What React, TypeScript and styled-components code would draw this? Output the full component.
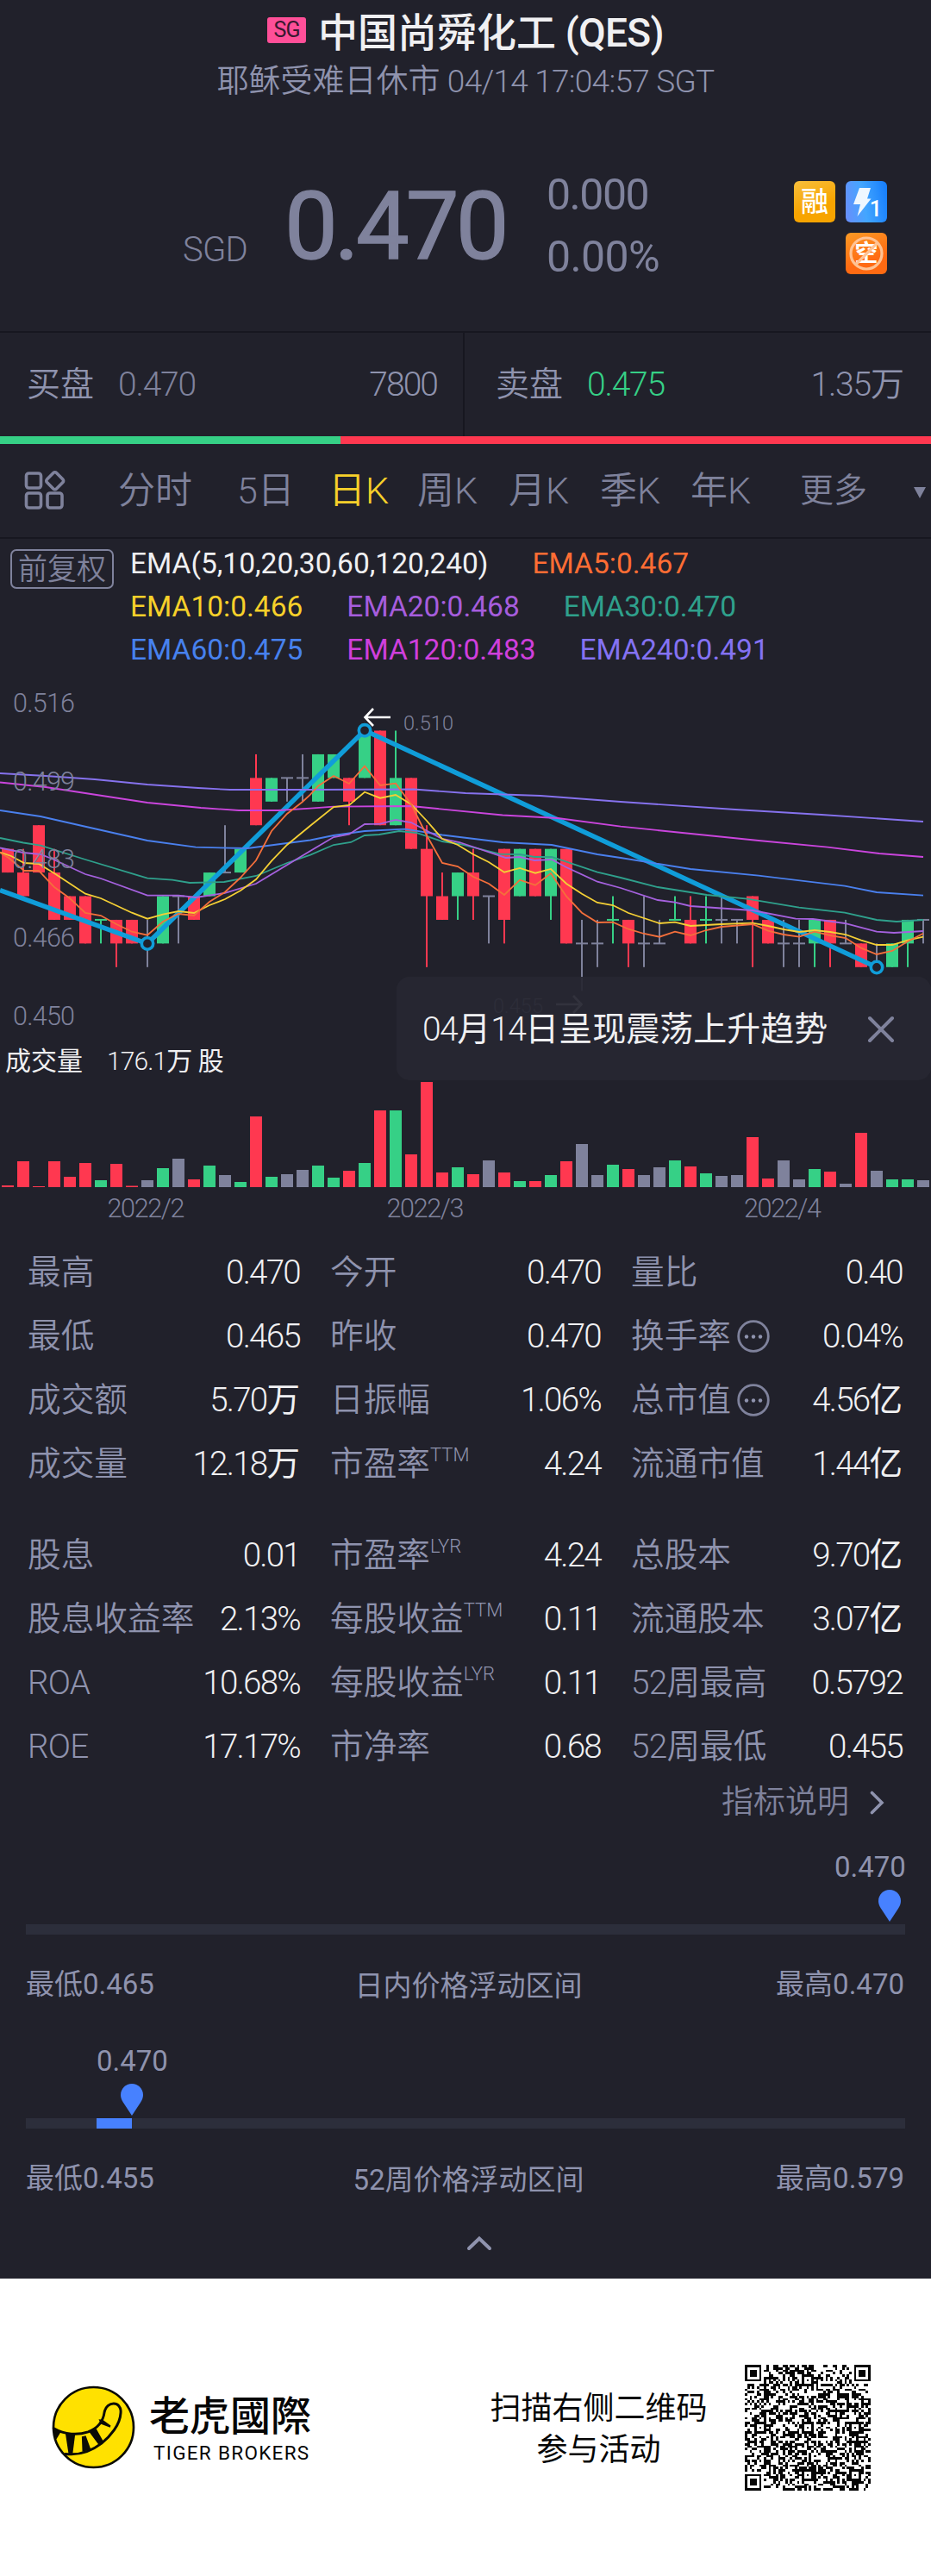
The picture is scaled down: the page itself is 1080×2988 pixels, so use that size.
import React from 'react';
import styled, { createGlobalStyle } from 'styled-components';

const colors = {
  bg: '#21212b',
  line: '#171720',
  muted: '#7f829c',
  label: '#8f93ae',
  white: '#f0f0f2',
  red: '#ff3850',
  green: '#36d086',
  grey: '#7f829c',
  yellow: '#f6d02a',
  blue: '#4781ff',
  trend: '#109dd9',
};

const GlobalStyle = createGlobalStyle`
  body {
    margin: 0;
    background: ${colors.bg};
    font-family: Roboto, 'Noto Sans CJK SC', sans-serif;
  }
`;

const Page = styled.div`
  width: 1080px;
  height: 2988px;
  overflow: hidden;
  background: ${colors.bg};
  color: ${colors.label};
  white-space: nowrap;
`;

const Latin = styled.span<{ $spacing: number; $light?: boolean }>`
  letter-spacing: ${({ $spacing }) => $spacing}em;
  font-weight: ${({ $light }) => ($light ? 300 : 'inherit')};
`;

interface MixedProps {
  text: string;
  spacing?: number;
  light?: boolean;
}

// tightens digits and latin letters only, CJK glyphs keep their natural pitch
const Mixed: React.FC<MixedProps> = ({ text, spacing = -0.05, light }) => (
  <span>
    {text.split(/([ -~]+)/).filter(Boolean).map((part, i) =>
      /[ -~]/.test(part) ? <Latin key={i} $spacing={spacing} $light={light}>{part}</Latin> : part
    )}
  </span>
);

/* ---------- header ---------- */

const Header = styled.header`
  box-sizing: border-box;
  height: 386px;
  padding-top: 8px;
  border-bottom: 2px solid ${colors.line};
`;

const TitleRow = styled.div`
  display: flex;
  align-items: center;
  height: 60px;
  padding-left: 310px;
  gap: 14px;
`;

const MarketTag = styled.span`
  width: 45px;
  height: 30px;
  margin-top: -6px;
  border-radius: 3px;
  background: #ff4f98;
  color: #3a1830;
  font-size: 25px;
  line-height: 30px;
  text-align: center;
  letter-spacing: -1px;
`;

const Title = styled.h1`
  margin: 0;
  color: ${colors.white};
  font-size: 46px;
  line-height: 62px;
  font-weight: 500;
`;

const Subtitle = styled.div`
  margin-top: 2px;
  font-size: 37px;
  line-height: 50px;
  font-weight: 350;
  text-align: center;
`;

const QuoteRow = styled.div`
  display: flex;
  align-items: flex-start;
  padding: 78px 51px 0 212px;
  color: ${colors.muted};
`;

const Currency = styled.span`
  width: 118px;
  padding-top: 67px;
  font-size: 40px;
  font-weight: 300;
  line-height: 50px;
`;

const Price = styled.span`
  width: 304px;
  padding-top: 10px;
  font-size: 110px;
  line-height: 110px;
  -webkit-text-stroke: 1.4px ${colors.muted};
`;

const Changes = styled.div`
  display: flex;
  flex-direction: column;
  flex: 1;
  font-size: 50px;
  line-height: 72px;
  margin-top: -8px;
`;

const Badges = styled.div`
  display: grid;
  grid-template-columns: 48px 48px;
  gap: 12px;
  margin-top: 12px;
  justify-items: end;
`;

const Badge = styled.span<{ $bg: string }>`
  position: relative;
  width: 48px;
  height: 48px;
  border-radius: 6px;
  background: ${({ $bg }) => $bg};
  color: #fff;
  font-size: 32px;
  font-weight: 500;
  line-height: 49px;
  text-align: center;
`;

const ShortBadge = styled(Badge)`
  grid-column: 2;
  font-size: 27px;
  font-weight: 700;
`;

const BadgeDrawing = styled.svg`
  position: absolute;
  left: 0;
  top: 0;
`;

const LevelDigit = styled.span`
  position: absolute;
  right: 6px;
  bottom: 4px;
  font-size: 25px;
  line-height: 22px;
`;

/* ---------- bid / ask ---------- */

const BidAsk = styled.section`
  display: flex;
  height: 120px;
`;

const Side = styled.div<{ $ask?: boolean }>`
  box-sizing: border-box;
  display: flex;
  width: ${({ $ask }) => ($ask ? 543 : 537)}px;
  padding: ${({ $ask }) => ($ask ? '0 31px 0 36px' : '0 30px 0 31px')};
  border-left: ${({ $ask }) => ($ask ? `2px solid ${colors.line}` : '0')};
  font-size: 39px;
  line-height: 121px;
  font-weight: 350;
`;

const SidePrice = styled.span<{ $color: string }>`
  flex: 1;
  margin-left: 28px;
  color: ${({ $color }) => $color};
`;

const RatioBar = styled.div`
  height: 9px;
  background: linear-gradient(to right, ${colors.green} 395px, ${colors.red} 395px);
`;

/* ---------- period tabs ---------- */

const Tabs = styled.nav`
  box-sizing: border-box;
  display: flex;
  align-items: center;
  height: 110px;
  padding-left: 28px;
  border-bottom: 2px solid ${colors.line};
`;

const Tab = styled.span<{ $width: number; $active?: boolean; $small?: boolean }>`
  flex: none;
  width: ${({ $width }) => $width}px;
  color: ${({ $active }) => ($active ? colors.yellow : colors.muted)};
  font-size: ${({ $small }) => ($small ? 39 : 43)}px;
  line-height: 109px;
  font-weight: 350;
`;

const GridIcon = styled.svg`
  flex: none;
  margin-right: 61px;
`;

const Arrow = styled.span`
  margin-top: 4px;
  border: 7.5px solid transparent;
  border-top: 13px solid ${colors.muted};
  border-bottom: 0;
`;

/* ---------- EMA legend ---------- */

const Legend = styled.section`
  display: flex;
  box-sizing: border-box;
  height: 155px;
  padding: 4px 0 0 12px;
`;

const AdjustTag = styled.span`
  box-sizing: border-box;
  width: 120px;
  height: 46px;
  margin: 8px 19px 0 0;
  border: 2px solid ${colors.muted};
  border-radius: 7px;
  color: ${colors.muted};
  font-size: 34px;
  line-height: 43px;
  font-weight: 350;
  text-align: center;
`;

const LegendRow = styled.div`
  display: flex;
  gap: 51px;
  height: 50px;
  font-size: 33.5px;
  line-height: 50px;
`;

const LegendItem = styled.span<{ $color: string }>`
  color: ${({ $color }) => $color};
`;

/* ---------- chart ---------- */

const ChartArea = styled.section`
  position: relative;
  height: 651px;
`;

const ChartSvg = styled.svg`
  display: block;
`;

const VolumeTitle = styled.div`
  display: flex;
  gap: 28px;
  height: 48px;
  padding-left: 6px;
  color: ${colors.white};
  font-size: 30px;
  line-height: 49px;
`;

const Toast = styled.div`
  position: absolute;
  left: 460px;
  top: 353px;
  box-sizing: border-box;
  display: flex;
  align-items: center;
  justify-content: space-between;
  width: 620px;
  height: 120px;
  padding: 2px 42px 0 30px;
  border-radius: 15px;
  background: rgba(39, 39, 50, 0.93);
  color: ${colors.white};
  font-size: 39px;
  line-height: 60px;
`;

/* ---------- stats ---------- */

const StatsGrid = styled.section<{ $gap?: boolean }>`
  display: grid;
  grid-template-columns: 316px 314px 315px;
  column-gap: 35px;
  grid-auto-rows: 74px;
  padding-left: 32px;
  margin-top: ${({ $gap }) => ($gap ? 32 : 8)}px;
`;

const Stat = styled.div`
  display: flex;
  align-items: center;
  height: 74px;
  font-size: 38.7px;
  line-height: 74px;
  font-weight: 350;
`;

const StatValue = styled.span`
  margin-left: auto;
  color: ${colors.white};
  font-size: 38.5px;
  font-weight: 400;
`;

const Sup = styled.span`
  align-self: flex-start;
  padding-top: 14px;
  font-size: 22px;
  line-height: 26px;
  font-weight: 300;
`;

const InfoIcon = styled.svg`
  margin-left: 7px;
`;

const HelpLink = styled.div`
  display: flex;
  align-items: center;
  justify-content: flex-end;
  gap: 24px;
  height: 48px;
  margin-top: 4px;
  padding-right: 54px;
  color: ${colors.muted};
  font-size: 37px;
  line-height: 48px;
  font-weight: 350;
`;

/* ---------- ranges ---------- */

const Range = styled.section<{ $first?: boolean }>`
  height: 225px;
  padding: 0 30px;
  margin-top: ${({ $first }) => ($first ? 28 : 0)}px;
  font-size: 33px;
`;

const RangeValue = styled.div`
  height: 46px;
  line-height: 46px;
`;

const Marker = styled.svg`
  display: block;
  margin-top: 3px;
`;

const Track = styled.div`
  height: 12px;
  margin-top: 3px;
  background: #2c2e3b;
`;

const Fill = styled.div`
  height: 12px;
  background: ${colors.blue};
`;

const RangeLabels = styled.div`
  display: flex;
  justify-content: space-between;
  margin-top: 38px;
  padding-right: 1px;
  line-height: 40px;

  span:nth-child(2) {
    padding: 2px 0 0 8px;
  }
`;

const Collapse = styled.div`
  display: flex;
  justify-content: center;
  padding-left: 31px;
  height: 50px;
`;

/* ---------- footer ---------- */

const Footer = styled.footer`
  box-sizing: border-box;
  display: flex;
  align-items: center;
  height: 345px;
  padding: 0 70px 0 60px;
  background: #fff;
  color: #060606;
`;

const Brand = styled.div`
  display: flex;
  flex-direction: column;
  width: 375px;
  margin-left: 16px;
  margin-top: -2px;
`;

const BrandName = styled.span`
  font-family: 'Noto Sans CJK TC', sans-serif;
  font-size: 47px;
  font-weight: 500;
  line-height: 56px;
`;

const BrandLatin = styled.span`
  margin-top: 4px;
  padding-left: 5px;
  font-size: 22.5px;
  line-height: 28px;
  letter-spacing: 1.3px;
`;

const ScanHint = styled.div`
  width: 293px;
  margin-top: 5px;
  font-size: 36px;
  line-height: 48px;
  text-align: center;
`;

const Logo = styled.svg`
  flex: none;
`;

const QrCode = styled.svg`
  flex: none;
  margin-left: auto;
`;

/* ---------- data ---------- */

type Tone = 'r' | 'g' | 'n';

// [tone, body top, body bottom, high, low] in ticks of 0.005 below 0.510
const candles: [Tone, number, number, number, number][] = [
  ['r', 5, 6, 5, 6], ['r', 6, 7, 5, 7], ['r', 4, 6, 4, 6], ['r', 6, 8, 5, 8], ['r', 7, 8, 7, 8],
  ['r', 7, 9, 7, 9], ['g', 8, 8, 8, 9], ['r', 8, 9, 8, 10], ['r', 8, 9, 8, 9], ['n', 9, 9, 8, 10],
  ['g', 7, 9, 7, 9], ['n', 7, 7, 7, 9], ['r', 7, 8, 7, 8], ['g', 6, 7, 6, 7], ['n', 6, 6, 4, 6],
  ['g', 5, 6, 5, 6], ['r', 2, 4, 1, 4], ['g', 2, 3, 2, 3], ['n', 2, 2, 2, 3], ['n', 2, 2, 1, 3],
  ['g', 1, 3, 1, 3], ['g', 1, 2, 1, 2], ['r', 2, 3, 2, 4], ['g', 0, 2, 0, 2], ['r', 0, 4, 0, 4],
  ['g', 2, 4, 0, 4], ['r', 2, 5, 2, 5], ['r', 5, 7, 4, 10], ['r', 7, 8, 6, 8], ['g', 6, 7, 6, 8],
  ['r', 6, 7, 5, 8], ['n', 7, 7, 7, 9], ['r', 5, 8, 5, 9], ['g', 5, 7, 5, 7], ['r', 5, 7, 5, 7],
  ['g', 5, 7, 5, 8], ['r', 5, 9, 5, 9], ['n', 9, 9, 8, 11], ['n', 9, 9, 8, 10], ['g', 8, 8, 7, 9],
  ['r', 8, 9, 8, 10], ['n', 9, 9, 7, 10], ['n', 9, 9, 8, 9], ['g', 8, 8, 7, 8], ['r', 8, 9, 7, 9],
  ['g', 8, 8, 7, 9], ['n', 8, 8, 7, 9], ['n', 8, 8, 8, 9], ['r', 7, 8, 7, 10], ['r', 8, 9, 8, 9],
  ['n', 9, 9, 8, 10], ['n', 9, 9, 8, 10], ['g', 8, 9, 8, 10], ['r', 8, 9, 8, 10], ['n', 9, 9, 8, 9],
  ['r', 9, 10, 9, 10], ['n', 10, 10, 9, 10], ['g', 9, 10, 9, 10], ['g', 8, 9, 8, 10], ['n', 8, 8, 8, 9],
];

const volumes = [
  2, 30, 1, 30, 12, 28, 8, 27, 1.5, 8, 22, 33, 9, 25, 14, 6, 82, 12, 15, 20,
  25, 11, 19, 28, 89, 89, 38, 122, 17, 23, 15, 31, 17, 7, 7, 14, 30, 50, 14, 26,
  21, 14, 23, 31, 24, 16, 13, 14, 58, 10, 31, 9, 21, 18, 4, 63, 19, 9, 9, 8,
];

const emaLines = [
  { color: '#8672ee', points: '0,117 53,120 110,124 171,130 230,134 267,136 360,136 480,135.5 540,140 627,143 720,150 853,159 953,165 1071,173' },
  { color: '#ca45dd', points: '0,127.5 53,133 171,151 233,157 277,160 323,160 360,157.7 387,155.7 477,155 583,165.5 647,169 720,178.7 880,195 960,202.7 1020,210 1071,214' },
  { color: '#4a80ee', points: '0,160 47,167 100,179 171,195 227,202.7 287,204 360,194.5 387,189 423,184 470,181.7 513,188.5 583,197 640,200 693,211 720,215 801,228 880,235.7 980,247.7 1017,255 1071,258.7' },
  { color: '#2fa08c', points: '0,192 27,197.5 47,200.7 99,217 171,238.7 200,240.7 220,244 260,243 297,236 333,221 360,211.7 387,200 407,197 423,189 440,188 463,184 483,186 513,196 533,199 580,210.7 603,211 620,214 640,214 693,231.7 720,238 763,249 820,258 867,262.7 927,272.7 980,278.7 1017,287 1040,289 1071,287' },
  { color: '#a561de', points: '0,203.5 27,209 47,211 60,216 99,234 117,239 171,258.7 207,258.7 227,261 260,256 297,245 360,207 387,191 405,187.7 423,176 441,175.7 459,171 477,174 513,193 533,197 587,215 603,214 620,218 640,217 657,226 693,242.7 720,250 763,264 783,266.7 801,271 873,276 923,285.7 943,286 980,291 1017,300.7 1037,302 1071,300' },
  { color: '#f4cf35', points: '0,208.5 13,213 28,221 45,222 63,233 99,256.7 117,262 153,278.7 171,285.7 189,280.7 207,277 225,279 243,270 261,263 279,253 297,240 315,218.7 333,200 360,177.7 387,156 405,154 423,138.7 441,145.7 459,142 477,153 495,172 513,193 531,200 549,211 567,220 585,231.7 603,227 621,232.7 639,228 657,245 675,256.7 693,267 711,270 729,279 747,285 765,291 783,289.7 801,294 837,292 873,290.7 891,294 909,298 927,301 945,299 963,301 981,304 999,310.7 1017,316 1035,316 1053,310.7 1071,306.7' },
  { color: '#f46f3b', points: '0,209 10,215 28,230 45,230 63,249 81,262 99,279 117,282 135,292 153,300.7 171,304.7 189,289 207,280 225,282 243,266 261,254.7 279,238 297,218 315,184 333,164 351,150 360,141.7 369,131.7 387,120 405,129 423,108.7 441,131 459,128.7 477,153 495,189 513,221 531,225 549,237 567,245 585,258 603,240.7 621,246.7 639,233 657,259.7 675,278.7 693,290 711,289.7 729,297.7 747,303 765,306.7 783,300.7 801,305 819,299 837,295 873,292 891,299.7 909,304 927,306.7 945,300.7 963,305 981,308 999,319.7 1017,327 1035,323 1053,312 1071,302.7' },
];

const legendRows = [
  [['EMA(5,10,20,30,60,120,240)', colors.white], ['EMA5:0.467', '#ff6d34']],
  [['EMA10:0.466', '#f6d02a'], ['EMA20:0.468', '#a65ddd'], ['EMA30:0.470', '#2fa08c']],
  [['EMA60:0.475', '#4781ee'], ['EMA120:0.483', '#cf3fdc'], ['EMA240:0.491', '#8472f3']],
];

const axisLabels: [string, number][] = [
  ['0.516', 45.7], ['0.499', 136.7], ['0.483', 227], ['0.466', 317.7], ['0.450', 408.7],
];

interface StatItem {
  label: string;
  value: string;
  sup?: string;
  info?: boolean;
}

const mainStats: StatItem[] = [
  { label: '最高', value: '0.470' }, { label: '今开', value: '0.470' }, { label: '量比', value: '0.40' },
  { label: '最低', value: '0.465' }, { label: '昨收', value: '0.470' }, { label: '换手率', value: '0.04%', info: true },
  { label: '成交额', value: '5.70万' }, { label: '日振幅', value: '1.06%' }, { label: '总市值', value: '4.56亿', info: true },
  { label: '成交量', value: '12.18万' }, { label: '市盈率', sup: 'TTM', value: '4.24' }, { label: '流通市值', value: '1.44亿' },
];

const extraStats: StatItem[] = [
  { label: '股息', value: '0.01' }, { label: '市盈率', sup: 'LYR', value: '4.24' }, { label: '总股本', value: '9.70亿' },
  { label: '股息收益率', value: '2.13%' }, { label: '每股收益', sup: 'TTM', value: '0.11' }, { label: '流通股本', value: '3.07亿' },
  { label: 'ROA', value: '10.68%' }, { label: '每股收益', sup: 'LYR', value: '0.11' }, { label: '52周最高', value: '0.5792' },
  { label: 'ROE', value: '17.17%' }, { label: '市净率', value: '0.68' }, { label: '52周最低', value: '0.455' },
];

const toneColor: Record<Tone, string> = { r: colors.red, g: colors.green, n: colors.grey };
const centerX = (i: number) => 9 + i * 18;
const levelY = (level: number) => 67.5 + level * 27.43;

/* ---------- parts ---------- */

const PriceChart: React.FC = () => (
  <ChartSvg width="1080" height="426" viewBox="0 0 1080 426">
    {candles.map(([tone, top, bottom, high, low], i) => (
      <g key={i} fill={toneColor[tone]}>
        <rect x={centerX(i) - 1} y={levelY(high)} width="2" height={levelY(low) - levelY(high)} />
        <rect
          x={centerX(i) - 7}
          y={levelY(top) - (top === bottom ? 1 : 0)}
          width="14"
          height={Math.max(levelY(bottom) - levelY(top), 2)}
        />
      </g>
    ))}
    <polyline points="0,252.7 171,314.5 423,67.3 1017,342" fill="none" stroke={colors.trend} strokeWidth="5.5" />
    {emaLines.map(({ color, points }) => (
      <polyline key={color} points={points} fill="none" stroke={color} strokeWidth="1.8" />
    ))}
    {[[171, 314.5], [423, 67.3], [1017, 342]].map(([x, y]) => (
      <circle key={x} cx={x} cy={y} r="6.7" fill={colors.bg} stroke={colors.trend} strokeWidth="3.6" />
    ))}
    <g fill={colors.muted} fontSize="30.5" fontWeight="300">
      {axisLabels.map(([text, y]) => (
        <text key={text} x="15" y={y} textLength="72">{text}</text>
      ))}
    </g>
    <g fill={colors.muted} fontSize="23.5" fontWeight="300">
      <text x="468" y="67" textLength="58">0.510</text>
      <text x="572" y="395" textLength="58">0.455</text>
    </g>
    <path d="M453 52H424M433 42L423.5 52L433 62" fill="none" stroke="#fff" strokeWidth="2.6" />
    <path d="M645 385H674M665 375L674.5 385L665 395" fill="none" stroke="#c5c6d2" strokeWidth="2.6" />
  </ChartSvg>
);

const VolumeChart: React.FC = () => (
  <ChartSvg width="1080" height="177" viewBox="0 0 1080 177">
    {volumes.map((v, i) => (
      <rect key={i} x={centerX(i) - 7} y={123 - v} width="14" height={v} fill={toneColor[candles[i][0]]} />
    ))}
    <g fill={colors.muted} fontSize="30.5" fontWeight="300" textAnchor="middle">
      <text x="169.5" y="157.7" textLength="90">2022/2</text>
      <text x="493.5" y="157.7" textLength="90">2022/3</text>
      <text x="908" y="157.7" textLength="90">2022/4</text>
    </g>
  </ChartSvg>
);

const StatCell: React.FC<StatItem> = ({ label, value, sup, info }) => (
  <Stat>
    <Mixed text={label} spacing={-0.02} />
    {sup && <Sup>{sup}</Sup>}
    {info && (
      <InfoIcon width="38" height="38" viewBox="0 0 38 38" fill={colors.label}>
        <circle cx="19" cy="19" r="17.3" fill="none" stroke={colors.muted} strokeWidth="2.8" />
        <circle cx="11" cy="19.5" r="2.2" />
        <circle cx="19" cy="19.5" r="2.2" />
        <circle cx="27" cy="19.5" r="2.2" />
      </InfoIcon>
    )}
    <StatValue><Mixed text={value} light spacing={-0.045} /></StatValue>
  </Stat>
);

interface PriceRangeProps {
  value: string;
  valueX: number;
  markerX: number;
  fillFrom: number;
  fillTo: number;
  labels: string[];
  first?: boolean;
}

const PriceRange: React.FC<PriceRangeProps> = ({ value, valueX, markerX, fillFrom, fillTo, labels, first }) => (
  <Range $first={first}>
    <RangeValue style={{ paddingLeft: valueX }}>{value}</RangeValue>
    <Marker width="26" height="37" viewBox="0 0 26 37" style={{ marginLeft: markerX - 13 }}>
      <path d="M13 0C5.8 0 0 5.8 0 13c0 3.2 1.2 6 2.8 8.6L13 37L23.2 21.6C24.8 19 26 16.2 26 13C26 5.8 20.2 0 13 0Z" fill={colors.blue} />
    </Marker>
    <Track>
      <Fill style={{ marginLeft: fillFrom, width: fillTo - fillFrom }} />
    </Track>
    <RangeLabels>
      {labels.map((label) => <span key={label}>{label}</span>)}
    </RangeLabels>
  </Range>
);

const QR_SIZE = 53;

const inSquare = (x: number, y: number, cx: number, cy: number) =>
  Math.max(Math.abs(x - cx), Math.abs(y - cy));

const buildQr = () => {
  let seed = 20220414;
  const random = () => {
    seed = (seed * 1103515245 + 12345) % 2147483648;
    return seed / 2147483648;
  };
  const finders = [[3, 3], [49, 3], [3, 49]];
  const aligns = [[26, 6], [6, 26], [26, 26], [46, 26], [26, 46], [46, 46]];
  let path = '';
  for (let y = 0; y < QR_SIZE; y++) {
    for (let x = 0; x < QR_SIZE; x++) {
      let dark = random() < 0.5;
      if (y === 6) dark = x % 2 === 0;
      if (x === 6) dark = y % 2 === 0;
      aligns.forEach(([cx, cy]) => {
        const d = inSquare(x, y, cx, cy);
        if (d <= 2) dark = d !== 1;
      });
      finders.forEach(([cx, cy]) => {
        const d = inSquare(x, y, cx, cy);
        if (d <= 4) dark = d < 2 || d === 3;
      });
      if (dark) path += `M${x} ${y}h1v1h-1z`;
    }
  }
  return path;
};

const qrPath = buildQr();

const App: React.FC = () => (
  <Page>
    <GlobalStyle />
    <Header>
      <TitleRow>
        <MarketTag>SG</MarketTag>
        <Title><Mixed text="中国尚舜化工 (QES)" spacing={-0.015} /></Title>
      </TitleRow>
      <Subtitle><Mixed text="耶稣受难日休市 04/14 17:04:57 SGT" spacing={-0.02} /></Subtitle>
      <QuoteRow>
        <Currency><Mixed text="SGD" spacing={-0.02} /></Currency>
        <Price><Mixed text="0.470" spacing={-0.036} /></Price>
        <Changes>
          <Mixed text="0.000" spacing={-0.03} />
          <Mixed text="0.00%" spacing={-0.012} />
        </Changes>
        <Badges>
          <Badge $bg="linear-gradient(160deg, #f8bf3c, #f7a400 60%)">融</Badge>
          <Badge $bg="linear-gradient(80deg, #6a8dfb, #43a6ff 45%, #147cfb)">
            <BadgeDrawing width="48" height="48" viewBox="0 0 48 48">
              <path d="M16 8H29L25 20.5H29.5L13.5 41L17 27H9Z" fill="#eef7ff" />
            </BadgeDrawing>
            <LevelDigit>1</LevelDigit>
          </Badge>
          <ShortBadge $bg="linear-gradient(160deg, #fb9a25, #ff6a12 65%)">
            空
            <BadgeDrawing width="48" height="48" viewBox="0 0 48 48" fill="none" stroke="#ffc394" strokeWidth="3.2">
              <circle cx="24" cy="24" r="18" />
              <path d="M37 11.5L11.5 37" />
            </BadgeDrawing>
          </ShortBadge>
        </Badges>
      </QuoteRow>
    </Header>

    <BidAsk>
      <Side>
        买盘
        <SidePrice $color={colors.muted}><Mixed text="0.470" spacing={-0.03} /></SidePrice>
        <Mixed text="7800" />
      </Side>
      <Side $ask>
        卖盘
        <SidePrice $color={colors.green}><Mixed text="0.475" spacing={-0.03} /></SidePrice>
        <Mixed text="1.35万" spacing={-0.03} />
      </Side>
    </BidAsk>
    <RatioBar />

    <Tabs>
      <GridIcon width="48" height="46" viewBox="0 0 48 46" fill="none" stroke={colors.muted} strokeWidth="3.6">
        <rect x="2.5" y="3" width="17" height="17" rx="3" />
        <rect x="2.5" y="26" width="17" height="17" rx="3" />
        <rect x="27" y="26" width="17" height="17" rx="3" />
        <rect x="28" y="4" width="15.5" height="15.5" rx="2.5" transform="rotate(45 35.7 11.7)" />
      </GridIcon>
      <Tab $width={138}>分时</Tab>
      <Tab $width={106}>5日</Tab>
      <Tab $width={103} $active>日K</Tab>
      <Tab $width={106}>周K</Tab>
      <Tab $width={106}>月K</Tab>
      <Tab $width={105}>季K</Tab>
      <Tab $width={127}>年K</Tab>
      <Tab $width={132} $small>更多</Tab>
      <Arrow />
    </Tabs>

    <Legend>
      <AdjustTag>前复权</AdjustTag>
      <div>
        {legendRows.map((row, i) => (
          <LegendRow key={i}>
            {row.map(([text, color]) => <LegendItem key={text} $color={color}>{text}</LegendItem>)}
          </LegendRow>
        ))}
      </div>
    </Legend>

    <ChartArea>
      <PriceChart />
      <VolumeTitle>
        <span>成交量</span>
        <Mixed text="176.1万 股" spacing={-0.03} light />
      </VolumeTitle>
      <VolumeChart />
      <Toast>
        <Mixed text="04月14日呈现震荡上升趋势" spacing={-0.04} light />
        <svg width="32" height="32" viewBox="0 0 32 32" stroke={colors.muted} strokeWidth="4" strokeLinecap="round">
          <path d="M3 3L29 29M29 3L3 29" />
        </svg>
      </Toast>
    </ChartArea>

    <StatsGrid>
      {mainStats.map((item, i) => <StatCell key={i} {...item} />)}
    </StatsGrid>
    <StatsGrid $gap>
      {extraStats.map((item, i) => <StatCell key={i} {...item} />)}
    </StatsGrid>
    <HelpLink>
      指标说明
      <svg width="17" height="28" viewBox="0 0 17 28" fill="none" stroke={colors.label} strokeWidth="3.6" strokeLinecap="round">
        <path d="M2.5 2.5L14 14L2.5 25.5" />
      </svg>
    </HelpLink>

    <PriceRange
      first
      value="0.470"
      valueX={938}
      markerX={1002}
      fillFrom={0}
      fillTo={0}
      labels={['最低0.465', '日内价格浮动区间', '最高0.470']}
    />
    <PriceRange
      value="0.470"
      valueX={82}
      markerX={123}
      fillFrom={82}
      fillTo={123}
      labels={['最低0.455', '52周价格浮动区间', '最高0.579']}
    />
    <Collapse>
      <svg width="30" height="18" viewBox="0 0 30 18" fill="none" stroke={colors.label} strokeWidth="4" strokeLinecap="round">
        <path d="M3 15L15 3.5L27 15" />
      </svg>
    </Collapse>

    <Footer>
      <Logo width="97" height="97" viewBox="58 112 292 292" fill="none" stroke="#0b0b06">
        <circle cx="204" cy="258" r="140" fill="#ffe100" strokeWidth="8" />
        <path d="M65 262C105 285 150 286 185 274C222 260 238 235 242 205C250 165 302 165 299 207C297 250 262 290 232 314C190 346 145 356 106 351" strokeWidth="9" strokeLinecap="round" />
        <path d="M64 262L90 274L74 300L66 285ZM106 280L140 281L131 352L117 352ZM163 290L177 287L195 336L165 343ZM188 273L212 260L238 307L222 319ZM222 230L236 232L264 252L262 259L230 247Z" fill="#0b0b06" stroke="none" />
      </Logo>
      <Brand>
        <BrandName>老虎國際</BrandName>
        <BrandLatin>TIGER BROKERS</BrandLatin>
      </Brand>
      <ScanHint>
        扫描右侧二维码
        <br />
        参与活动
      </ScanHint>
      <QrCode width="146" height="146" viewBox="0 0 53 53" shapeRendering="crispEdges">
        <path d={qrPath} fill="#050505" />
      </QrCode>
    </Footer>
  </Page>
);

export default App;
